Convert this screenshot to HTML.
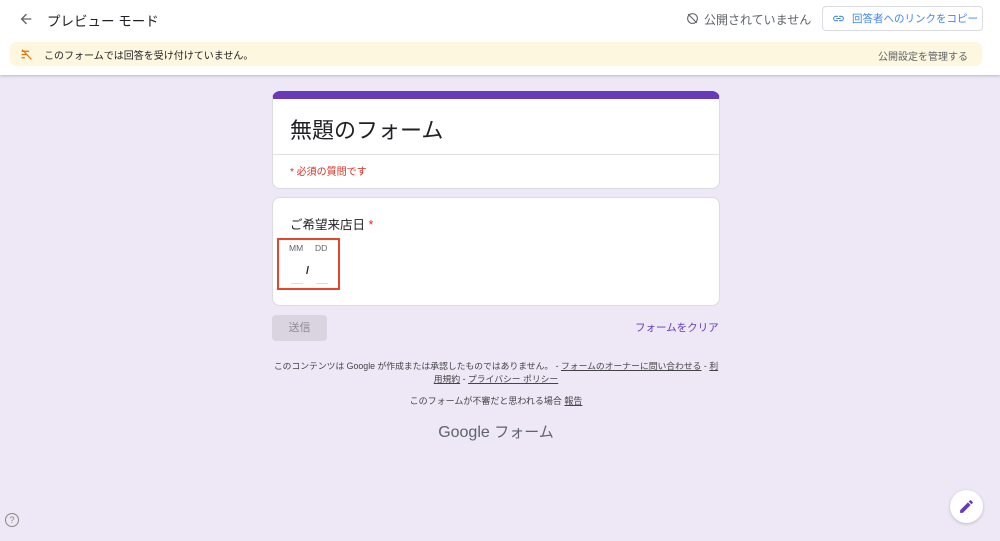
<!DOCTYPE html>
<html><head><meta charset="utf-8"><style>
*{box-sizing:border-box;margin:0;padding:0}
body{width:1000px;height:541px;background:#ede7f6;font-family:"Liberation Sans","Noto Sans CJK JP",sans-serif;position:relative;overflow:hidden;color:#202124}
.top{position:absolute;left:0;top:0;width:1000px;height:75px;background:#fff;box-shadow:0 1px 3px rgba(0,0,0,.2)}
.abs{position:absolute;white-space:nowrap}
.banner{position:absolute;left:10px;top:42px;width:972px;height:24px;background:#fdf7e0;border-radius:6px}
.card{position:absolute;left:272px;width:448px;background:#fff;border-radius:8px;border:1px solid #dadce0}
a{color:#444;text-decoration:underline}
</style></head><body>
<div class="top">
 <svg class="abs" style="left:18px;top:11px" width="16" height="16" viewBox="0 0 24 24"><path d="M20 11H7.8l5.6-5.6L12 4l-8 8 8 8 1.4-1.4L7.8 13H20z" fill="#5f6368"/></svg>
 <div class="abs" style="left:47px;top:10px;font-size:13.5px;color:#202124">プレビュー モード</div>
 <svg class="abs" style="left:686px;top:12px" width="13" height="13" viewBox="0 0 24 24" fill="none" stroke="#5f6368" stroke-width="2"><circle cx="12" cy="12" r="9"/><path d="M4 4l16 16"/></svg>
 <div class="abs" style="left:704px;top:11px;font-size:12px;color:#5f6368">公開されていません</div>
 <div class="abs" style="left:822px;top:6px;width:161px;height:25px;border:1px solid #dadce0;border-radius:4px"></div>
 <svg class="abs" style="left:832px;top:12px" width="13" height="13" viewBox="0 0 24 24"><path d="M3.9 12a3.1 3.1 0 013.1-3.1h4V7H7a5 5 0 000 10h4v-1.9H7A3.1 3.1 0 013.9 12zM8 13h8v-2H8zm9-6h-4v1.9h4a3.1 3.1 0 010 6.2h-4V17h4a5 5 0 000-10z" fill="#4285f4"/></svg>
 <div class="abs" style="left:852px;top:11px;font-size:10.5px;color:#4285f4">回答者へのリンクをコピー</div>
 <div class="banner"></div>
 <svg class="abs" style="left:20px;top:48px" width="13" height="13" viewBox="0 0 24 24" fill="none" stroke="#e37400" stroke-width="2.2"><path d="M3 6h14M3 12h10M3 18h6M4 3l17 18"/></svg>
 <div class="abs" style="left:44px;top:47px;font-size:10px;color:#202124">このフォームでは回答を受け付けていません。</div>
 <div class="abs" style="left:878px;top:48px;font-size:10px;color:#5f6368">公開設定を管理する</div>
</div>
<div class="card" style="top:91px;height:98px;border-top:8px solid #673ab7;border-color:#dadce0;border-top-color:#673ab7">
 <div class="abs" style="left:17px;top:14px;font-size:22px;color:#202124">無題のフォーム</div>
 <div class="abs" style="left:0;top:55px;width:446px;border-top:1px solid #e0e0e0"></div>
 <div class="abs" style="left:17px;top:64px;font-size:10px;color:#d93025">* 必須の質問です</div>
</div>
<div class="card" style="top:197px;height:109px">
 <div class="abs" style="left:17px;top:16px;font-size:12.5px">ご希望来店日 <span style="color:#d93025">*</span></div>
 <div class="abs" style="left:4px;top:40px;width:63px;height:52px;border:2px solid #e8462a"></div>
 <div class="abs" style="left:16px;top:45px;font-size:8.5px;color:#5f6368">MM</div>
 <div class="abs" style="left:42px;top:45px;font-size:8.5px;color:#5f6368">DD</div>
 <div class="abs" style="left:33px;top:67px;font-size:11px;font-weight:bold">/</div>
 <div class="abs" style="left:18px;top:85px;width:12px;border-top:1px solid #ddd"></div>
 <div class="abs" style="left:43px;top:85px;width:12px;border-top:1px solid #ddd"></div>
</div>
<div class="abs" style="left:272px;top:315px;width:55px;height:26px;background:#d9d4e0;border-radius:4px;font-size:11px;color:#8d8a93;text-align:center;line-height:26px">送信</div>
<div class="abs" style="left:635px;top:320px;font-size:10.5px;color:#673ab7">フォームをクリア</div>
<div class="abs" style="left:272px;top:360px;width:448px;text-align:center;font-size:8.8px;line-height:13px;color:#444">このコンテンツは Google が作成または承認したものではありません。 - <a>フォームのオーナーに問い合わせる</a> - <a>利</a><br><a>用規約</a> - <a>プライバシー ポリシー</a></div>
<div class="abs" style="left:272px;top:394px;width:448px;text-align:center;font-size:9px;color:#444">このフォームが不審だと思われる場合 <a>報告</a></div>
<div class="abs" style="left:272px;top:421px;width:448px;text-align:center;font-size:16px;color:#5f6368">Google <span style="font-size:15px">フォーム</span></div>
<div class="abs" style="left:5px;top:513px;width:14px;height:14px;border:1.5px solid #888;border-radius:50%;font-size:9px;color:#888;text-align:center;line-height:12px">?</div>
<div class="abs" style="left:950px;top:490px;width:33px;height:33px;background:#fff;border-radius:50%;box-shadow:0 1px 3px rgba(0,0,0,.2)"></div>
<svg class="abs" style="left:958px;top:498px" width="17" height="17" viewBox="0 0 24 24"><path d="M3 17.25V21h3.75L17.8 9.94l-3.75-3.75zM20.7 7.04a1 1 0 000-1.41l-2.34-2.34a1 1 0 00-1.41 0l-1.83 1.83 3.75 3.75z" fill="#673ab7"/></svg>
</body></html>
